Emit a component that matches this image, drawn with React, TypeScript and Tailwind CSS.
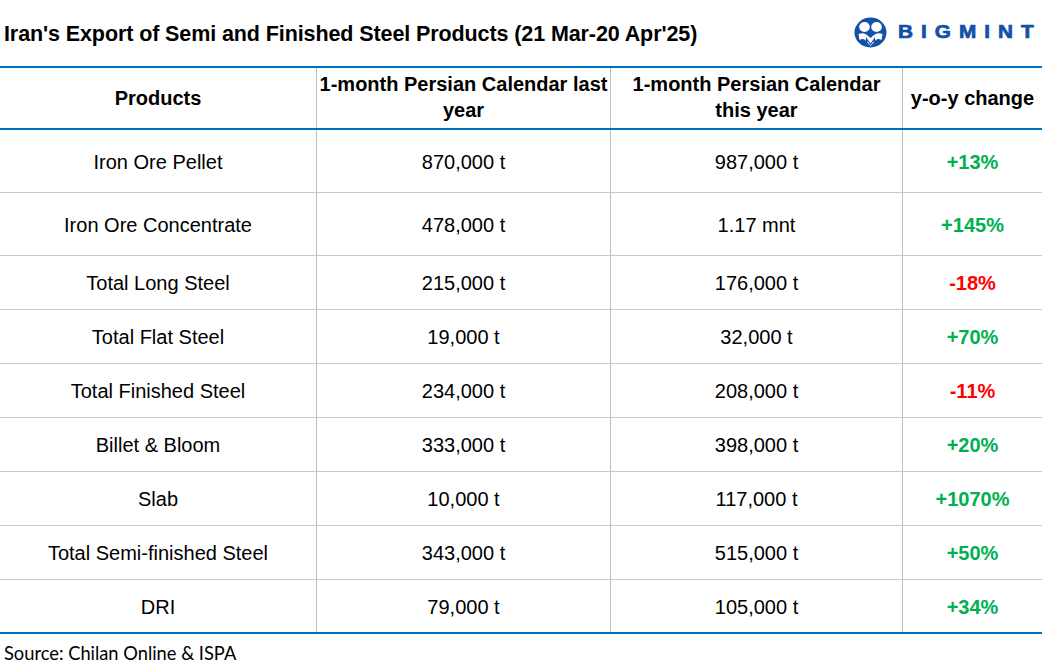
import React from "react";

type Row = { p: string; a: string; b: string; c: string; up: boolean; tall?: boolean };

const rows: Row[] = [
  { p: "Iron Ore Pellet", a: "870,000 t", b: "987,000 t", c: "+13%", up: true, tall: true },
  { p: "Iron Ore Concentrate", a: "478,000 t", b: "1.17 mnt", c: "+145%", up: true, tall: true },
  { p: "Total Long Steel", a: "215,000 t", b: "176,000 t", c: "-18%", up: false },
  { p: "Total Flat Steel", a: "19,000 t", b: "32,000 t", c: "+70%", up: true },
  { p: "Total Finished Steel", a: "234,000 t", b: "208,000 t", c: "-11%", up: false },
  { p: "Billet & Bloom", a: "333,000 t", b: "398,000 t", c: "+20%", up: true },
  { p: "Slab", a: "10,000 t", b: "117,000 t", c: "+1070%", up: true },
  { p: "Total Semi-finished Steel", a: "343,000 t", b: "515,000 t", c: "+50%", up: true },
  { p: "DRI", a: "79,000 t", b: "105,000 t", c: "+34%", up: true },
];

function Logo() {
  return (
    <div className="flex items-center gap-[11px]">
      <svg width="33" height="31" viewBox="0 0 33 31" className="shrink-0">
        <ellipse cx="16.5" cy="15.5" rx="16" ry="15" fill="#1450a8" />
        <ellipse cx="10.5" cy="10" rx="5.3" ry="5" fill="#fff" />
        <ellipse cx="22.5" cy="10" rx="5.3" ry="5" fill="#fff" />
        <path d="M4.5 17 Q10 15 13 18 L16.5 21 L20 18 Q23 15 28.5 17 L27.5 23 Q24 21 22 23 L16.5 29 L11 23 Q9 21 5.5 23 Z" fill="#fff" />
        <path d="M12 20 L16.5 26.5 L21 20 L21.5 28.5 L20 28.5 L19.6 24 L16.5 28.5 L13.4 24 L13 28.5 L11.5 28.5 Z" fill="#1450a8" />
      </svg>
      <div className="w-[144px] shrink-0">
        <span
          className="inline-block whitespace-nowrap text-[18px] font-bold leading-none text-[#1450a8] tracking-[7px] [-webkit-text-stroke:0.7px_#1450a8]"
          style={{ fontFamily: '"Liberation Sans", Arial, sans-serif', transform: "scaleX(1.15)", transformOrigin: "left center" }}
        >
          BIGMINT
        </span>
      </div>
    </div>
  );
}

export default function App() {
  const cell = "flex items-center justify-center text-center";
  return (
    <div
      className="w-[1042px] h-[671px] bg-white text-black overflow-hidden"
      style={{ fontFamily: '"Liberation Sans", Arial, sans-serif' }}
    >
      <div className="h-[66px] flex items-center justify-between pl-[4px]">
        <div className="text-[21.5px] font-bold pt-[2px] tracking-[-0.1px] whitespace-nowrap">
          Iran's Export of Semi and Finished Steel Products (21 Mar-20 Apr'25)
        </div>
        <div className="pb-[1px]">
          <Logo />
        </div>
      </div>
      <div className="border-t-2 border-b-2 border-[#0070c0]">
        <div className="grid grid-cols-[317px_294px_292px_1fr] h-[62px] border-b-2 border-[#0070c0] text-[20px] font-bold leading-[26px]">
          <div className={`${cell} border-r border-[#bfbfbf]`}>Products</div>
          <div className={`${cell} border-r border-[#bfbfbf] pb-[2px]`}>
            1-month Persian Calendar last
            <br />
            year
          </div>
          <div className={`${cell} border-r border-[#bfbfbf] pb-[2px]`}>
            1-month Persian Calendar
            <br />
            this year
          </div>
          <div className={`${cell}`}>y-o-y change</div>
        </div>
        {rows.map((r, i) => (
          <div
            key={r.p}
            className={`grid grid-cols-[317px_294px_292px_1fr] text-[20px] ${
              r.tall ? "h-[63px]" : i === rows.length - 1 ? "h-[52px]" : "h-[54px]"
            } ${i === rows.length - 1 ? "" : "border-b border-[#c8c8c8]"}`}
          >
            <div className={`${cell} border-r border-[#bfbfbf] pt-[1px]`}>{r.p}</div>
            <div className={`${cell} border-r border-[#bfbfbf] pt-[1px]`}>{r.a}</div>
            <div className={`${cell} border-r border-[#bfbfbf] pt-[1px]`}>{r.b}</div>
            <div className={`${cell} pt-[1px] font-bold ${r.up ? "text-[#00b050]" : "text-[#ff0000]"}`}>{r.c}</div>
          </div>
        ))}
      </div>
      <div
        className="pl-[4px] pt-[10px] text-[18.3px] leading-none text-black"
        style={{ fontFamily: 'Lato, "Open Sans", sans-serif' }}
      >
        Source: Chilan Online &amp; ISPA
      </div>
    </div>
  );
}
